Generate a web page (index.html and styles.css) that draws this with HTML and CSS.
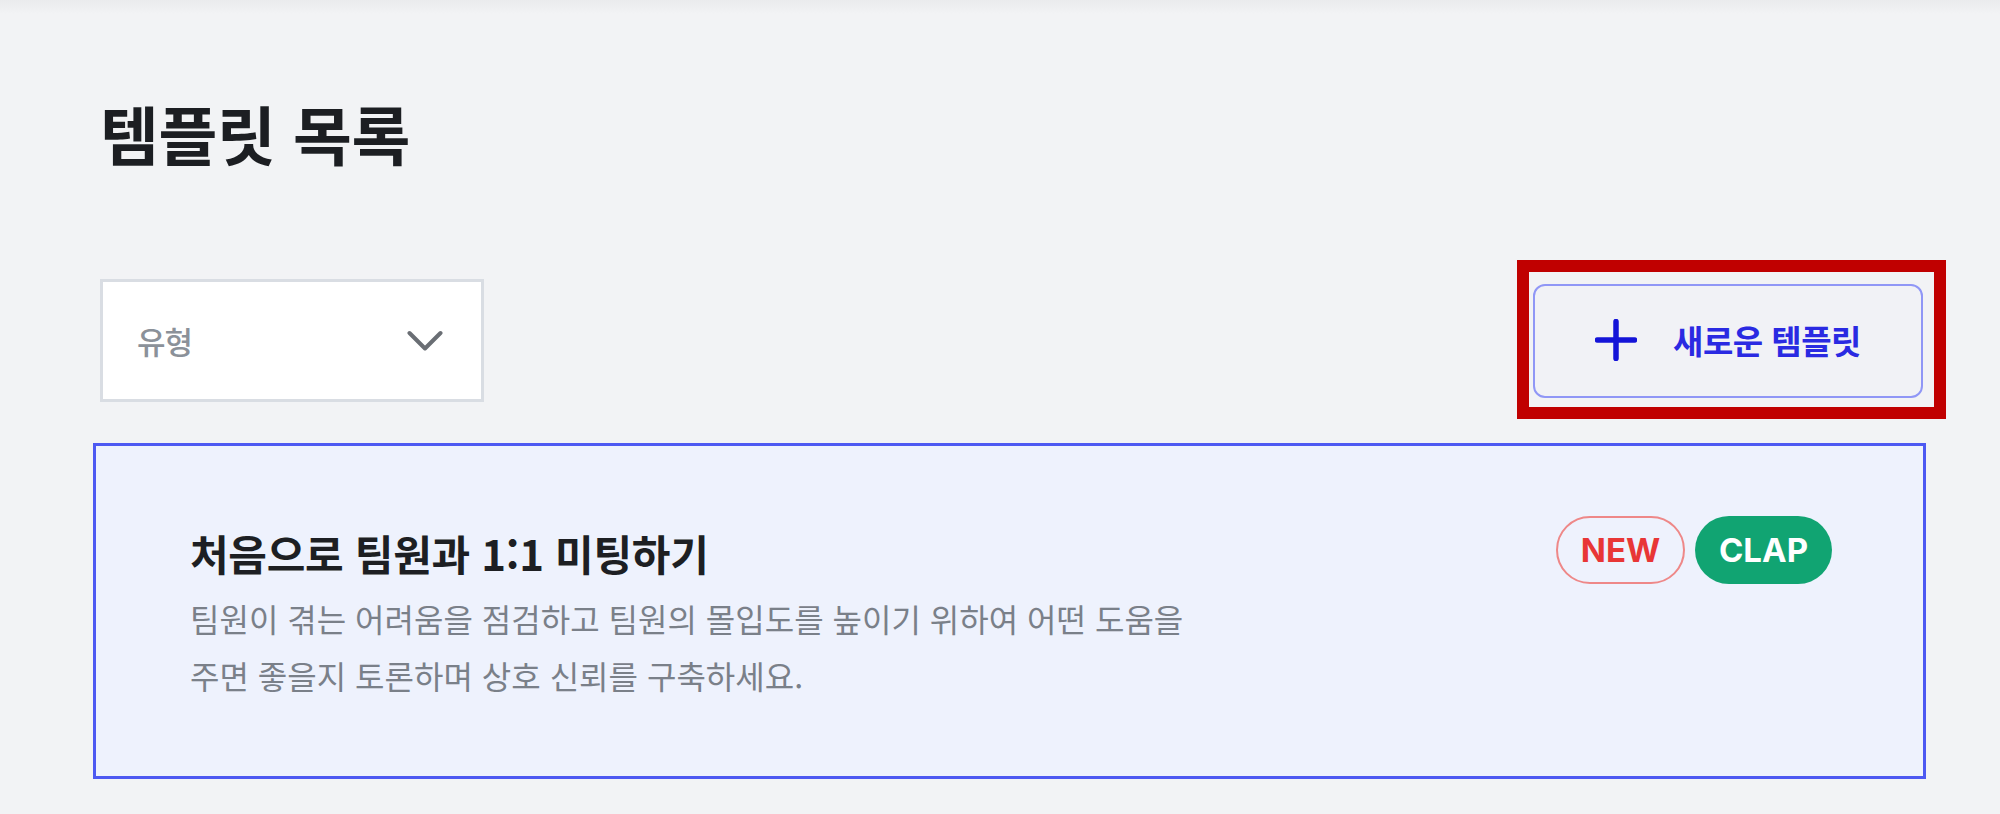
FILE: index.html
```html
<!DOCTYPE html>
<html lang="ko">
<head>
<meta charset="utf-8">
<title>템플릿 목록</title>
<link rel="stylesheet" href="styles.css">
</head>
<body>
<main class="page">
  <h1 class="page-title">템플릿 목록</h1>
  <div class="toolbar">
    <button class="select" type="button">
      <span class="select-label">유형</span>
      <svg class="chevron" width="36" height="22" viewBox="0 0 36 22" aria-hidden="true">
        <polyline points="2.5,3 18,18.5 33.5,3" fill="none" stroke="#6a6e74" stroke-width="4" stroke-linecap="round" stroke-linejoin="round"/>
      </svg>
    </button>
    <div class="new-wrap">
      <button class="new-btn" type="button">
        <svg class="plus" width="42" height="42" viewBox="0 0 42 42" aria-hidden="true">
          <path d="M21 2.5 V39.5 M2.5 21 H39.5" fill="none" stroke="#1414d8" stroke-width="5.5" stroke-linecap="round"/>
        </svg>
        <span>새로운 템플릿</span>
      </button>
      <span class="annotation" aria-hidden="true"></span>
    </div>
  </div>
  <article class="card">
    <div class="card-body">
      <h2 class="card-title">처음으로 팀원과 1:1 미팅하기</h2>
      <p class="card-desc">팀원이 겪는 어려움을 점검하고 팀원의 몰입도를 높이기 위하여 어떤 도움을 주면 좋을지 토론하며 상호 신뢰를 구축하세요.</p>
    </div>
    <div class="badges">
      <span class="badge badge-new">NEW</span>
      <span class="badge badge-clap">CLAP</span>
    </div>
  </article>
</main>
</body>
</html>
```

FILE: styles.css
```css
* {
  box-sizing: border-box;
}

html, body {
  margin: 0;
  padding: 0;
}

body {
  width: 2000px;
  height: 814px;
  overflow: hidden;
  background: linear-gradient(#eaebed 0, #f2f3f5 14px) #f2f3f5;
  font-family: "Noto Sans CJK KR", "Noto Sans", sans-serif;
  color: #1d1f23;
}

.page {
  padding: 95px 74px 0 93px;
}

.page-title {
  margin: 0 0 0 7px;
  font-size: 64px;
  line-height: 74px;
  font-weight: 700;
  letter-spacing: -0.4px;
  color: #1c1e22;
}

.toolbar {
  margin: 110px 3px 0 7px;
  display: flex;
  align-items: center;
  justify-content: space-between;
}

.select {
  width: 384px;
  height: 123px;
  background: #ffffff;
  border: 3px solid #d9dde3;
  border-radius: 0;
  padding: 0 38px 0 34px;
  display: flex;
  align-items: center;
  justify-content: space-between;
  font-family: inherit;
  cursor: pointer;
}

.select-label {
  font-size: 31px;
  font-weight: 500;
  letter-spacing: -1px;
  color: #8b9199;
  line-height: 1;
}

.chevron {
  display: block;
}

.new-wrap {
  position: relative;
}

.new-btn {
  width: 390px;
  height: 114px;
  border: 2px solid #9097f6;
  border-radius: 12px;
  background: #f1f2f6;
  display: flex;
  align-items: center;
  justify-content: center;
  gap: 36px;
  font-family: inherit;
  font-size: 33px;
  font-weight: 700;
  letter-spacing: -0.5px;
  color: #2a2ae2;
  padding: 0 0 2px 0;
  cursor: pointer;
}

.plus {
  display: block;
}

.annotation {
  position: absolute;
  left: -16px;
  top: -24px;
  right: -23px;
  bottom: -21px;
  border: 12px solid #c00000;
  pointer-events: none;
}

.card {
  margin-top: 41px;
  height: 336px;
  border: 3px solid #4d59f2;
  background: #eef2fd;
  padding: 70px 91px 71px 94px;
  display: flex;
  justify-content: space-between;
  align-items: flex-start;
}

.card-body {
  padding-top: 8px;
}

.card-title {
  margin: 0;
  font-size: 42px;
  line-height: 58px;
  font-weight: 700;
  letter-spacing: -0.3px;
  color: #1d1f23;
}

.card-desc {
  margin: 8px 0 0 0;
  max-width: 1025px;
  font-size: 32px;
  line-height: 57px;
  font-weight: 400;
  letter-spacing: 0;
  color: #7a8089;
  word-break: keep-all;
}

.badges {
  display: flex;
  gap: 10px;
}

.badge {
  height: 68px;
  border-radius: 34px;
  display: flex;
  align-items: center;
  justify-content: center;
  font-family: "Inter", "Liberation Sans", sans-serif;
  font-size: 33px;
  font-weight: 700;
  line-height: 1;
}

.badge-new {
  width: 129px;
  border: 2px solid #ee8888;
  color: #e83636;
}

.badge-clap {
  width: 137px;
  background: #11a472;
  color: #ffffff;
}
```
